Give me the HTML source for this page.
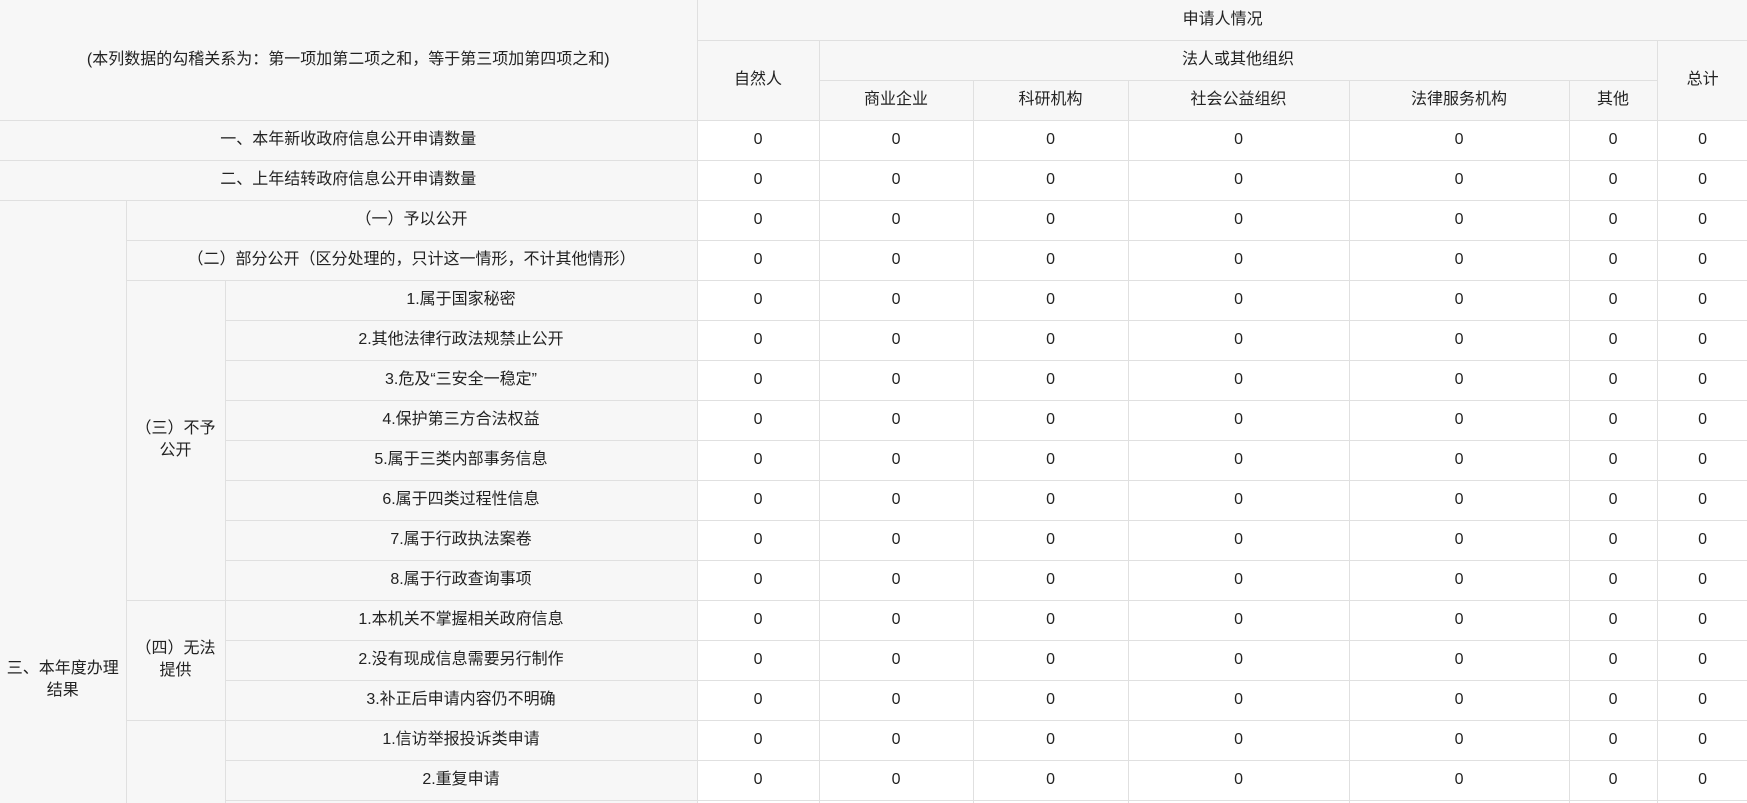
<!DOCTYPE html>
<html><head><meta charset="utf-8"><style>
html,body{margin:0;padding:0;width:1747px;height:803px;overflow:hidden;background:#fff}
table{border-collapse:collapse;table-layout:fixed;width:1748px;font-family:"Liberation Sans","Noto Sans CJK SC",sans-serif;font-size:16px;color:#222}
td{border:1px solid #e0e0e0;text-align:center;vertical-align:middle;padding:0 4px;background:#fff;line-height:22px;overflow:hidden}
tr{height:40px}
td.g{background:#f7f7f7}
td.n{padding:0 6px}
</style></head><body>
<table>
<colgroup><col style="width:126px"><col style="width:99px"><col style="width:472px"><col style="width:122px"><col style="width:154px"><col style="width:155px"><col style="width:221px"><col style="width:220px"><col style="width:88px"><col style="width:91px"></colgroup>
<tr><td class="g" colspan="3" rowspan="3" style="border-top:none;border-left:none">(本列数据的勾稽关系为：第一项加第二项之和，等于第三项加第四项之和)</td><td class="g" colspan="7" style="border-top:none">申请人情况</td></tr>
<tr><td class="g" rowspan="2">自然人</td><td class="g" colspan="5">法人或其他组织</td><td class="g" rowspan="2">总计</td></tr>
<tr><td class="g">商业企业</td><td class="g">科研机构</td><td class="g">社会公益组织</td><td class="g">法律服务机构</td><td class="g">其他</td></tr>
<tr><td class="g" colspan="3" style="border-left:none">一、本年新收政府信息公开申请数量</td><td>0</td><td>0</td><td>0</td><td>0</td><td>0</td><td>0</td><td>0</td></tr>
<tr><td class="g" colspan="3" style="border-left:none">二、上年结转政府信息公开申请数量</td><td>0</td><td>0</td><td>0</td><td>0</td><td>0</td><td>0</td><td>0</td></tr>
<tr><td class="g" rowspan="25" style="border-left:none;padding:0 2px">三、本年度办理结果</td><td class="g" colspan="2">（一）予以公开</td><td>0</td><td>0</td><td>0</td><td>0</td><td>0</td><td>0</td><td>0</td></tr>
<tr><td class="g" colspan="2">（二）部分公开（区分处理的，只计这一情形，不计其他情形）</td><td>0</td><td>0</td><td>0</td><td>0</td><td>0</td><td>0</td><td>0</td></tr>
<tr><td class="g n" rowspan="8">（三）不予公开</td><td class="g">1.属于国家秘密</td><td>0</td><td>0</td><td>0</td><td>0</td><td>0</td><td>0</td><td>0</td></tr>
<tr><td class="g">2.其他法律行政法规禁止公开</td><td>0</td><td>0</td><td>0</td><td>0</td><td>0</td><td>0</td><td>0</td></tr>
<tr><td class="g">3.危及“三安全一稳定”</td><td>0</td><td>0</td><td>0</td><td>0</td><td>0</td><td>0</td><td>0</td></tr>
<tr><td class="g">4.保护第三方合法权益</td><td>0</td><td>0</td><td>0</td><td>0</td><td>0</td><td>0</td><td>0</td></tr>
<tr><td class="g">5.属于三类内部事务信息</td><td>0</td><td>0</td><td>0</td><td>0</td><td>0</td><td>0</td><td>0</td></tr>
<tr><td class="g">6.属于四类过程性信息</td><td>0</td><td>0</td><td>0</td><td>0</td><td>0</td><td>0</td><td>0</td></tr>
<tr><td class="g">7.属于行政执法案卷</td><td>0</td><td>0</td><td>0</td><td>0</td><td>0</td><td>0</td><td>0</td></tr>
<tr><td class="g">8.属于行政查询事项</td><td>0</td><td>0</td><td>0</td><td>0</td><td>0</td><td>0</td><td>0</td></tr>
<tr><td class="g n" rowspan="3">（四）无法提供</td><td class="g">1.本机关不掌握相关政府信息</td><td>0</td><td>0</td><td>0</td><td>0</td><td>0</td><td>0</td><td>0</td></tr>
<tr><td class="g">2.没有现成信息需要另行制作</td><td>0</td><td>0</td><td>0</td><td>0</td><td>0</td><td>0</td><td>0</td></tr>
<tr><td class="g">3.补正后申请内容仍不明确</td><td>0</td><td>0</td><td>0</td><td>0</td><td>0</td><td>0</td><td>0</td></tr>
<tr><td class="g n" rowspan="7">（五）不予处理</td><td class="g">1.信访举报投诉类申请</td><td>0</td><td>0</td><td>0</td><td>0</td><td>0</td><td>0</td><td>0</td></tr>
<tr><td class="g">2.重复申请</td><td>0</td><td>0</td><td>0</td><td>0</td><td>0</td><td>0</td><td>0</td></tr>
<tr><td class="g">3.要求提供公开出版物</td><td>0</td><td>0</td><td>0</td><td>0</td><td>0</td><td>0</td><td>0</td></tr>
<tr><td class="g">4.无正当理由大量反复申请</td><td>0</td><td>0</td><td>0</td><td>0</td><td>0</td><td>0</td><td>0</td></tr>
<tr><td class="g">5.要求行政机关确认或重新出具已获取信息</td><td>0</td><td>0</td><td>0</td><td>0</td><td>0</td><td>0</td><td>0</td></tr>
<tr><td class="g">6.其他</td><td>0</td><td>0</td><td>0</td><td>0</td><td>0</td><td>0</td><td>0</td></tr>
<tr><td class="g">7.其他</td><td>0</td><td>0</td><td>0</td><td>0</td><td>0</td><td>0</td><td>0</td></tr>
<tr><td class="g" colspan="2">（六）其他处理</td><td>0</td><td>0</td><td>0</td><td>0</td><td>0</td><td>0</td><td>0</td></tr>
<tr><td class="g" colspan="2">（七）其他</td><td>0</td><td>0</td><td>0</td><td>0</td><td>0</td><td>0</td><td>0</td></tr>
<tr><td class="g" colspan="2">（八）其他</td><td>0</td><td>0</td><td>0</td><td>0</td><td>0</td><td>0</td><td>0</td></tr>
<tr><td class="g" colspan="2">（九）总计</td><td>0</td><td>0</td><td>0</td><td>0</td><td>0</td><td>0</td><td>0</td></tr>
</table>
</body></html>
